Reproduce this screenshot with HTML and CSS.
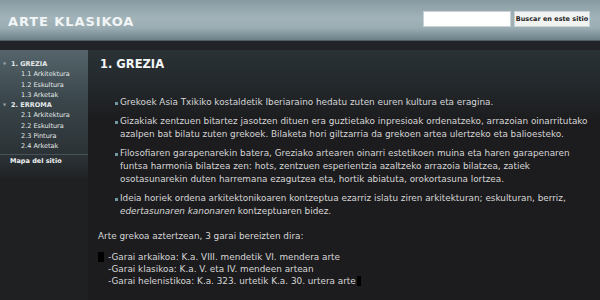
FILE: index.html
```html
<!DOCTYPE html>
<html lang="eu">
<head>
    <meta charset="UTF-8">
    <title>Arte Klasikoa</title>
    <link rel="stylesheet" href="styles.css">
</head>
<body>
    <div class="header">
        <div class="site-title">ARTE KLASIKOA</div>
        <form class="search">
            <input type="text" class="search-input">
            <button type="button" class="search-button">Buscar en este sitio</button>
        </form>
    </div>
    <div class="band"></div>
    <div class="main">
        <div class="sidebar">
            <ul class="menu">
                <li class="menu-top"><span class="arrow">&#9660;</span>1. GREZIA</li>
                <li class="menu-sub">1.1 Arkitektura</li>
                <li class="menu-sub">1.2 Eskultura</li>
                <li class="menu-sub">1.3 Arketak</li>
                <li class="menu-top"><span class="arrow">&#9660;</span>2. ERROMA</li>
                <li class="menu-sub">2.1 Arkitektura</li>
                <li class="menu-sub">2.2 Eskultura</li>
                <li class="menu-sub">2.3 Pintura</li>
                <li class="menu-sub">2.4 Arketak</li>
            </ul>
            <div class="sitemap">Mapa del sitio</div>
        </div>
        <div class="content">
            <h1>1. GREZIA</h1>
            <ul class="points">
                <li>Grekoek Asia Txikiko kostaldetik Iberiaraino hedatu zuten euren kultura eta eragina.</li>
                <li>Gizakiak zentzuen bitartez jasotzen dituen era guztietako inpresioak ordenatzeko, arrazoian oinarritutako azalpen bat bilatu zuten grekoek. Bilaketa hori giltzarria da grekoen artea ulertzeko eta balioesteko.</li>
                <li>Filosofiaren garapenarekin batera, Greziako artearen oinarri estetikoen muina eta haren garapenaren funtsa harmonia bilatzea zen: hots, zentzuen esperientzia azaltzeko arrazoia bilatzea, zatiek osotasunarekin duten harremana ezagutzea eta, hortik abiatuta, orokortasuna lortzea.</li>
                <li>Ideia horiek ordena arkitektonikoaren kontzeptua ezarriz islatu ziren arkitekturan; eskulturan, berriz, <em>edertasunaren kanonaren</em> kontzeptuaren bidez.</li>
            </ul>
            <p class="intro">Arte grekoa aztertzean, 3 garai bereizten dira:</p>
            <div class="periods">
                <div><span class="mark"></span>-Garai arkaikoa: K.a. VIII. mendetik VI. mendera arte</div>
                <div>-Garai klasikoa: K.a. V. eta IV. mendeen artean</div>
                <div>-Garai helenistikoa: K.a. 323. urtetik K.a. 30. urtera arte<span class="mark end"></span></div>
            </div>
        </div>
    </div>
</body>
</html>
```

FILE: styles.css
```css
body {
    margin: 0;
    background: #1c1c1e;
    font-family: "DejaVu Sans", Verdana, sans-serif;
    color: #d6d6d6;
}

.header {
    height: 40px;
    display: flex;
    align-items: center;
    justify-content: space-between;
    padding: 0 10px 0 8px;
    background: linear-gradient(#869aa2, #a2b4b9 45%, #9aadb3 70%, #6d8189);
    border-bottom: 1px solid #4e5e64;
}

.site-title {
    font-size: 13px;
    font-weight: bold;
    letter-spacing: 0.9px;
    color: #f2f5f6;
    padding-top: 3px;
}

.search {
    display: flex;
    gap: 3px;
    margin-top: -3px;
}

.search-input {
    width: 86px;
    height: 14px;
    padding: 0;
    border: 1px solid #c9d2d5;
    background: #fff;
}

.search-button {
    width: 76px;
    height: 16px;
    padding: 0;
    border: 1px solid #c9d2d5;
    background: #f1f2f2;
    color: #222;
    font-family: "DejaVu Sans", Verdana, sans-serif;
    font-size: 6.5px;
    font-weight: bold;
}

.band {
    height: 9px;
    background: #222327;
}

.main {
    display: grid;
    grid-template-columns: 88px 1fr;
    min-height: 250px;
}

.sidebar {
    background: linear-gradient(#55656b, #3a464b 50px, #2a3034 110px, #1e2022 130px);
    padding-top: 9px;
}

.menu {
    list-style: none;
    margin: 0;
    padding: 0;
}

.menu li {
    height: 10.3px;
    line-height: 10px;
    font-size: 6.5px;
    color: #e4e9ea;
}

.menu-top {
    font-weight: bold;
    padding-left: 3px;
}

.arrow {
    display: inline-block;
    width: 8px;
    font-size: 4px;
    color: #9aa7ab;
    vertical-align: 1px;
}

.menu-sub {
    padding-left: 21px;
}

.sitemap {
    margin-top: 2px;
    border-top: 1px solid #46535a;
    padding: 2px 0 0 10px;
    font-size: 6.5px;
    font-weight: bold;
    color: #f0f3f4;
}

.content {
    background: linear-gradient(#2a3236, #22272a 40px, #1c1c1e 70px);
    padding: 7px 3px 0 10px;
    font-size: 8.85px;
}

h1 {
    margin: 0 0 25px 2px;
    font-size: 11.5px;
    color: #f4f6f7;
}

.points {
    margin: 0;
    padding-left: 22px;
    list-style: none;
}

.points li {
    position: relative;
    line-height: 13px;
    margin-bottom: 6px;
}

.points li::before {
    content: "";
    position: absolute;
    left: -5px;
    top: 6px;
    width: 3px;
    height: 3px;
    background: #6f9aa3;
}

.intro {
    margin: 12px 0 8px 0;
    line-height: 13px;
}

.periods {
    padding-left: 10px;
    line-height: 12px;
}

.mark {
    display: inline-block;
    width: 6px;
    height: 10px;
    background: #000;
    vertical-align: -2px;
    margin-left: -10px;
    margin-right: 4px;
}

.mark.end {
    width: 4px;
    margin: 0 0 0 1px;
}
```
